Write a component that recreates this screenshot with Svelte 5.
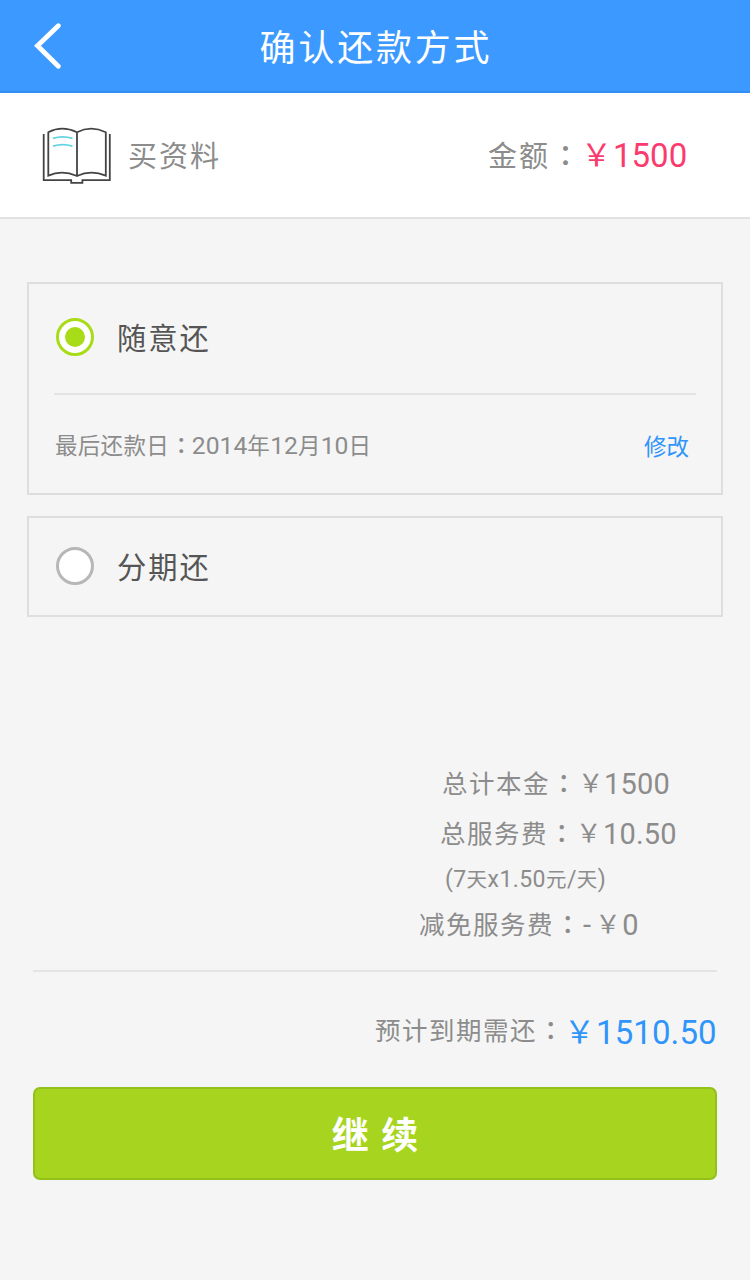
<script>
  let plan = $state('free');
</script>

<div class="screen">
  <header>
    <button class="back" aria-label="返回">
      <svg width="28" height="46" viewBox="0 0 28 46"><path d="M24.3 2.7 3.5 22.8l20.8 20.4" fill="none" stroke="#fff" stroke-width="4.8" stroke-linecap="round" stroke-linejoin="miter" /></svg>
    </button>
    <h1>确认还款方式</h1>
  </header>

  <section class="purpose">
    <svg class="book" width="70" height="58" viewBox="0 0 70 58" fill="none" stroke="#444" stroke-width="1.8">
      <path d="M1.7 7v46.2h27.5v2.6h11.2v-2.6h27.4V7" />
      <path d="M6.3 5.2Q20-1.8 35 5.2 49-1.8 63.8 5.2v43.4Q49 42.4 35 49 20 42.4 6.3 48.6zM35 5.2V49" />
      <path d="M11 11.4q9.5-3 19.5 0M11 19.2q9.5-3 19.5 0" stroke="#62d3e2" />
    </svg>
    <span class="name">买资料</span>
    <span class="label">金额<i>：</i></span>
    <span class="yen pink">￥</span><span class="num pink">1500</span>
  </section>

  <main>
    <section class="card">
      <button class="choice" onclick={() => (plan = 'free')}>
        <span class="radio" class:on={plan === 'free'}></span>
        <span class="title">随意还</span>
      </button>
      <div class="detail">
        <span class="date">最后还款日<i>：</i><b>2014</b>年<b>12</b>月<b>10</b>日</span>
        <a href="#edit">修改</a>
      </div>
    </section>
    <section class="card second">
      <button class="choice" onclick={() => (plan = 'parts')}>
        <span class="radio" class:on={plan === 'parts'}></span>
        <span class="title">分期还</span>
      </button>
    </section>

    <section class="summary">
      <div class="row principal"><span>总计本金<i>：</i></span><span class="yen">￥</span><b>1500</b></div>
      <div class="row fee"><span>总服务费<i>：</i></span><span class="yen">￥</span><b>10.50</b></div>
      <div class="row note"><b>(7</b>天<b>x1.50</b>元<b>/</b>天<b>)</b></div>
      <div class="row waive"><span>减免服务费<i>：</i></span><b class="minus">-</b><span class="yen">￥</span><b>0</b></div>
    </section>
    <div class="total"><span>预计到期需还<i>：</i></span><span class="yen">￥</span><b>1510.50</b></div>
    <button class="go">继 续</button>
  </main>
</div>

<style>
  :global(body) { margin: 0; background: #f5f5f5; }
  .screen { width: 750px; height: 1280px; overflow: hidden; background: #f5f5f5; color: #8c8c8c; font-family: "Noto Sans CJK SC", sans-serif; box-sizing: border-box; }
  .screen * { box-sizing: border-box; }
  button { font: inherit; border: 0; background: none; padding: 0; margin: 0; }
  i { font-style: normal; font-weight: 500; font-family: "Noto Sans CJK TC", sans-serif; display: inline-block; line-height: 1; transform: translate(1px, 0); }
  b, .num { font-family: Roboto, sans-serif; font-weight: 400; letter-spacing: 0; }
  span, b { white-space: nowrap; }
  header { height: 93px; background: #3b99ff; border-bottom: 2px solid #318ff4; display: grid; grid-template-columns: 94px 1fr 94px; align-items: center; }
  .back { display: flex; padding-left: 34px; }
  h1 { margin: 0; color: #fff; font-size: 36px; font-weight: 400; letter-spacing: 2.8px; text-align: center; line-height: 50px; padding: 0 0 1px 2px; }
  .purpose { height: 126px; background: #fff; border-bottom: 2px solid #e2e2e2; display: flex; align-items: center; padding-left: 42px; line-height: 44px; }
  .book { margin-top: 2px; }
  .name { margin-left: 16px; width: 360px; font-size: 29px; letter-spacing: 2px; padding-bottom: 3px; }
  .label { width: 94px; font-size: 29px; letter-spacing: 2px; padding-bottom: 3px; }
  .yen { transform: translateY(-2px); }
  .pink { color: #fb3a6d; }
  .purpose .yen { width: 31px; font-size: 31px; transform: translate(-1px, -2px); }
  .num { font-size: 33px; padding-top: 1px; }
  main { padding: 63px 27px 0; }
  .card { border: 2px solid #dedede; height: 213px; padding: 0 25px; }
  .second { height: 101px; margin-top: 21px; }
  .choice { display: flex; align-items: center; width: 100%; height: 109px; padding-bottom: 3px; color: #555; }
  .second .choice { height: 97px; padding-bottom: 2px; }
  .radio { width: 38px; height: 38px; border: 3px solid #b7b7b7; border-radius: 50%; background: #fff; margin-left: 2px; display: grid; place-items: center; }
  .on { border-color: #a9dc18; }
  .on::after { content: ""; width: 20px; height: 20px; border-radius: 50%; background: #a9dc18; }
  .title { margin-left: 23px; font-size: 29.3px; letter-spacing: 2px; line-height: 44px; padding-bottom: 2px; }
  .detail { display: flex; justify-content: space-between; align-items: center; border-top: 2px solid #e4e4e4; height: 100px; padding: 2px 7px 0 1px; font-size: 22.5px; line-height: 34px; }
  .date { letter-spacing: .3px; }
  .date b { font-size: 24.7px; }
  .detail a { color: #3095fb; text-decoration: none; }
  .summary { height: 355px; margin: 0 6px; padding-top: 141px; border-bottom: 2px solid #e4e4e4; }
  .row { display: flex; align-items: baseline; font-size: 25.5px; letter-spacing: 1.5px; line-height: 50px; height: 50px; }
  .row > span:first-child { transform: translateY(-1px); }
  .row b { font-size: 29px; letter-spacing: .2px; }
  .principal { padding-left: 409px; }
  .principal .yen { margin-left: 1px; width: 26px; }
  .fee { padding-left: 407px; }
  .fee .yen { margin-left: 1px; width: 27px; }
  .waive .yen { margin-left: 1px; }
  .note { padding-left: 412px; height: 41px; line-height: 41px; font-size: 20.5px; letter-spacing: .5px; }
  .note b { font-size: 23px; letter-spacing: .4px; }
  .waive { padding-left: 386px; }
  .waive .minus { margin: 0 3px 0 2px; }
  .total { display: flex; align-items: baseline; height: 115px; padding: 31px 0 0 348px; font-size: 25.5px; letter-spacing: 1.5px; line-height: 56px; }
  .total > span:first-child { transform: translateY(-4px); }
  .total > b, .total .yen { color: #3095fb; }
  .total > b { font-size: 33px; letter-spacing: .1px; }
  .total .yen { font-size: 31px; width: 32px; transform: translateY(-1px); }
  .go { display: block; width: 684px; height: 93px; margin-left: 6px; padding: 0 0 2px 2px; background: #a6d41f; border: 2px solid #93c01b; border-radius: 7px; color: #fff; font-size: 37px; font-weight: 700; letter-spacing: 2px; }
</style>
